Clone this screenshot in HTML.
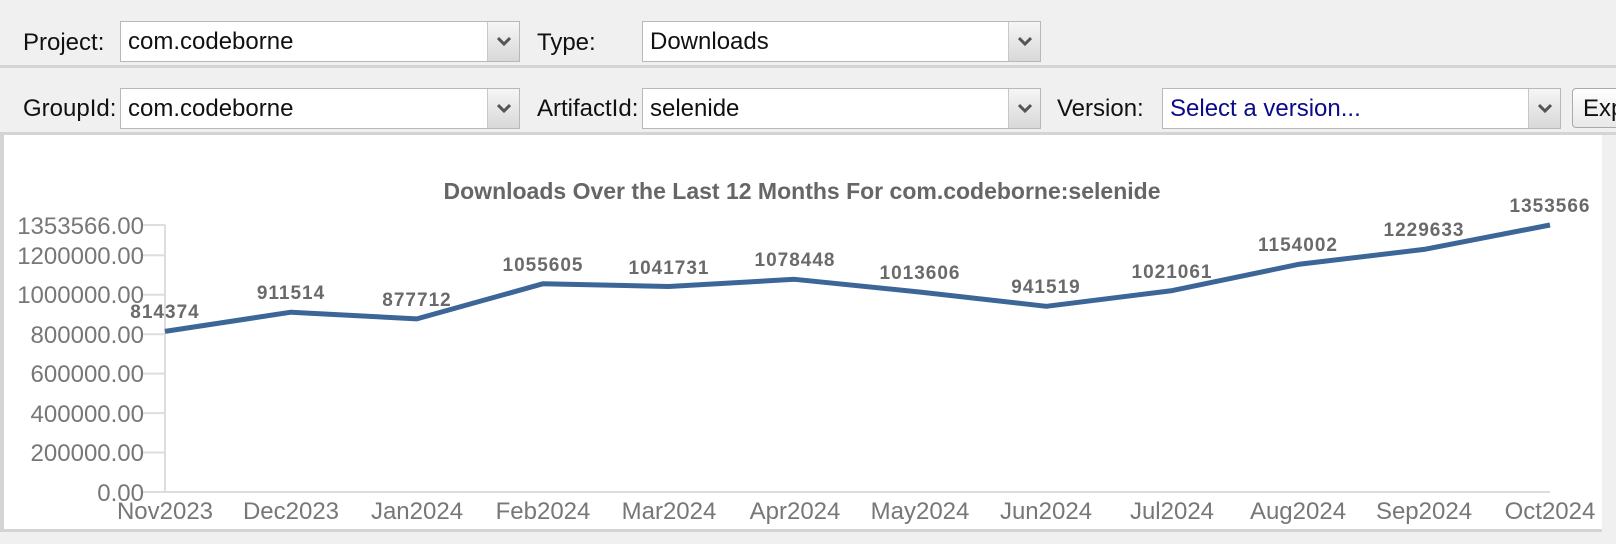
<!DOCTYPE html>
<html><head><meta charset="utf-8"><style>
body{margin:0;width:1616px;height:544px;background:#f0f0f0;overflow:hidden;position:relative;font-family:"Liberation Sans",sans-serif}
.row{position:absolute;left:0;width:1616px;border-bottom:3px solid #d4d4d4}
.lbl{position:absolute;font-size:24px;color:#111}
.sel{position:absolute;height:41px;background:#fff;border:1px solid #b8b8b8;box-sizing:border-box}
.sel span{position:absolute;left:7px;top:6px;font-size:24px;color:#111;white-space:nowrap}
.sel i{position:absolute;right:0;top:0;bottom:0;width:31px;border-left:1px solid #c8c8c8;background:linear-gradient(#f6f6f6,#d8d8d8)}
.sel i svg{position:absolute;left:9px;top:14px}
</style></head><body>
<div class="row" style="top:0;height:65px"></div>
<div class="row" style="top:68px;height:64px"></div>

<div class="lbl" style="left:23px;top:29px">Project:</div>
<div class="sel" style="left:120px;top:21px;width:400px"><span>com.codeborne</span><i><svg width="14" height="10"><path d="M1 2 L7 8 L13 2" stroke="#555" stroke-width="3" fill="none"/></svg></i></div>
<div class="lbl" style="left:537px;top:29px">Type:</div>
<div class="sel" style="left:642px;top:21px;width:399px"><span>Downloads</span><i><svg width="14" height="10"><path d="M1 2 L7 8 L13 2" stroke="#555" stroke-width="3" fill="none"/></svg></i></div>

<div class="lbl" style="left:23px;top:95px">GroupId:</div>
<div class="sel" style="left:120px;top:88px;width:400px"><span>com.codeborne</span><i><svg width="14" height="10"><path d="M1 2 L7 8 L13 2" stroke="#555" stroke-width="3" fill="none"/></svg></i></div>
<div class="lbl" style="left:537px;top:95px">ArtifactId:</div>
<div class="sel" style="left:642px;top:88px;width:399px"><span>selenide</span><i><svg width="14" height="10"><path d="M1 2 L7 8 L13 2" stroke="#555" stroke-width="3" fill="none"/></svg></i></div>
<div class="lbl" style="left:1057px;top:95px">Version:</div>
<div class="sel" style="left:1162px;top:88px;width:399px"><span style="color:#0a0a8a">Select a version...</span><i><svg width="14" height="10"><path d="M1 2 L7 8 L13 2" stroke="#555" stroke-width="3" fill="none"/></svg></i></div>
<div style="position:absolute;left:1572px;top:88px;width:60px;height:40px;border:1px solid #aaa;border-radius:4px;background:linear-gradient(#fff,#e8e8e8);box-sizing:border-box"><span style="position:absolute;left:10px;top:6px;font-size:24px;color:#111">Exp</span></div>

<div style="position:absolute;left:0;top:135px;width:1602px;height:397px;background:#fff;border-left:4px solid #d4d4d4;border-bottom:3px solid #d4d4d4;box-sizing:border-box"></div>

<svg style="position:absolute;left:0;top:0" width="1616" height="544">
<g font-family="Liberation Sans" fill="#777">
<text x="802" y="199" text-anchor="middle" font-size="23" font-weight="bold" fill="#666">Downloads Over the Last 12 Months For com.codeborne:selenide</text>
<g stroke="#ddd" stroke-width="2">
<line x1="165" y1="225" x2="165" y2="492"/><line x1="165" y1="492" x2="1550" y2="492"/>
<line x1="143" y1="225" x2="165" y2="225"/><line x1="143" y1="255.3" x2="165" y2="255.3"/><line x1="143" y1="294.7" x2="165" y2="294.7"/><line x1="143" y1="334.2" x2="165" y2="334.2"/><line x1="143" y1="373.6" x2="165" y2="373.6"/><line x1="143" y1="413.1" x2="165" y2="413.1"/><line x1="143" y1="452.5" x2="165" y2="452.5"/><line x1="143" y1="492" x2="165" y2="492"/>
</g>
<g font-size="24" text-anchor="end">
<text x="144" y="234">1353566.00</text><text x="144" y="264">1200000.00</text><text x="144" y="303">1000000.00</text><text x="144" y="343">800000.00</text><text x="144" y="382">600000.00</text><text x="144" y="422">400000.00</text><text x="144" y="461">200000.00</text><text x="144" y="501">0.00</text>
</g>
<g font-size="24" text-anchor="middle">
<text x="165" y="519">Nov2023</text><text x="291" y="519">Dec2023</text><text x="417" y="519">Jan2024</text><text x="543" y="519">Feb2024</text><text x="669" y="519">Mar2024</text><text x="795" y="519">Apr2024</text><text x="920" y="519">May2024</text><text x="1046" y="519">Jun2024</text><text x="1172" y="519">Jul2024</text><text x="1298" y="519">Aug2024</text><text x="1424" y="519">Sep2024</text><text x="1550" y="519">Oct2024</text>
</g>
<polyline points="165,331.4 290.9,312.2 416.8,318.9 542.7,283.8 668.6,286.5 794.5,279.3 920.4,292.1 1046.3,306.3 1172.2,290.6 1298.1,264.4 1424,249.4 1550,225" fill="none" stroke="#3d6698" stroke-width="5" stroke-linejoin="round"/>
<g font-size="19" font-weight="bold" text-anchor="middle" fill="#6a6a6a" letter-spacing="1">
<text x="165" y="318">814374</text><text x="291" y="299">911514</text><text x="417" y="306">877712</text><text x="543" y="271">1055605</text><text x="669" y="274">1041731</text><text x="795" y="266">1078448</text><text x="920" y="279">1013606</text><text x="1046" y="293">941519</text><text x="1172" y="278">1021061</text><text x="1298" y="251">1154002</text><text x="1424" y="236">1229633</text><text x="1550" y="212">1353566</text>
</g>
</g>
</svg>
</body></html>
